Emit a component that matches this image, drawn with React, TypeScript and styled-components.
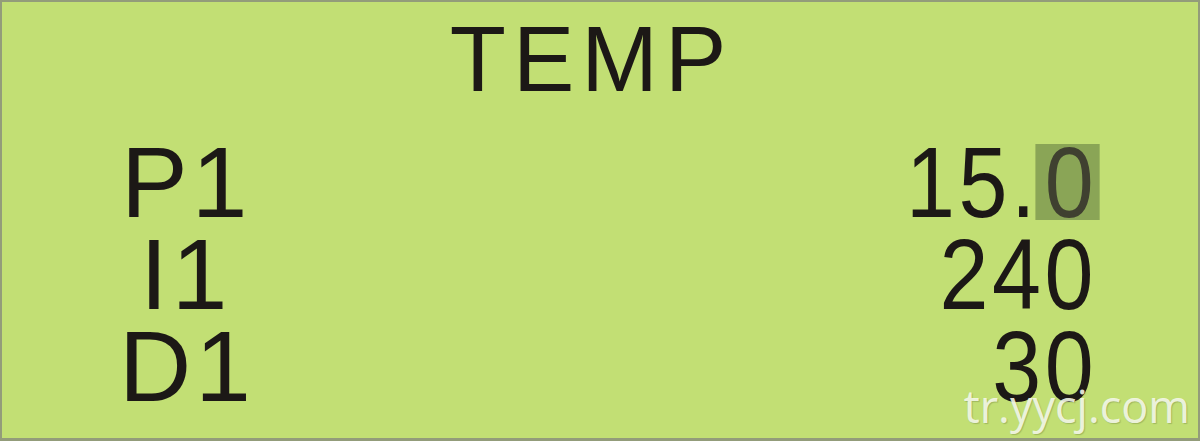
import styled, { createGlobalStyle } from 'styled-components';

const GlobalStyle = createGlobalStyle`
  html, body {
    margin: 0;
    padding: 0;
    background: #c2df74;
  }
`;

const Screen = styled.div`
  position: relative;
  box-sizing: border-box;
  width: 1200px;
  height: 441px;
  padding-top: 11px;
  background: #c2df74;
  border: 2px solid #939c7a;
  border-bottom-width: 3px;
  color: #1c1816;
  font-family: 'Liberation Sans', Arial, sans-serif;
  overflow: hidden;
`;

const Title = styled.div`
  font-size: 92px;
  line-height: 92px;
  letter-spacing: 7px;
  text-align: center;
  padding-right: 17px;
`;

const Rows = styled.div`
  margin-top: 31px;
  display: flex;
  flex-direction: column;
`;

const Row = styled.div`
  display: flex;
  justify-content: space-between;
  align-items: baseline;
  height: 92px;
  padding: 0 101px 0 117px;
  font-size: 100px;
  line-height: 92px;
`;

const Label = styled.span<{ $indent?: number }>`
  letter-spacing: 4px;
  padding-left: ${(p) => p.$indent ?? 0}px;
`;

// LCD digits are a touch narrower than the label glyphs
const Value = styled.span`
  display: inline-block;
  letter-spacing: 4px;
  white-space: nowrap;
  transform: scaleX(0.88);
  transform-origin: right center;
`;

const Cursor = styled.span`
  display: inline-block;
  height: 76px;
  line-height: 76px;
  margin: 0 -3.4px 0 -4px;
  padding: 0 7.2px 0 10.6px;
  letter-spacing: 0;
  background: #8aa556;
  color: #3f4030;
`;

const Watermark = styled.div`
  position: absolute;
  right: 8px;
  bottom: 10px;
  font-family: 'Open Sans', 'Noto Sans', sans-serif;
  font-size: 45px;
  line-height: 45px;
  color: rgba(246, 249, 236, 0.9);
  text-shadow: 1px 1px 1px rgba(60, 70, 30, 0.25);
`;

type Param = { name: string; value: string; indent?: number; editing?: boolean };

const params: Param[] = [
  { name: 'P1', value: '15.0', indent: 2, editing: true },
  { name: 'I1', value: '240', indent: 21 },
  { name: 'D1', value: '30' },
];

function ParamValue({ value, editing }: { value: string; editing?: boolean }) {
  if (!editing) return <Value>{value}</Value>;
  return (
    <Value>
      {value.slice(0, -1)}
      <Cursor>{value.slice(-1)}</Cursor>
    </Value>
  );
}

export default function App() {
  return (
    <>
      <GlobalStyle />
      <Screen>
        <Title>TEMP</Title>
        <Rows>
          {params.map((p) => (
            <Row key={p.name}>
              <Label $indent={p.indent}>{p.name}</Label>
              <ParamValue value={p.value} editing={p.editing} />
            </Row>
          ))}
        </Rows>
        <Watermark>tr.yycj.com</Watermark>
      </Screen>
    </>
  );
}
